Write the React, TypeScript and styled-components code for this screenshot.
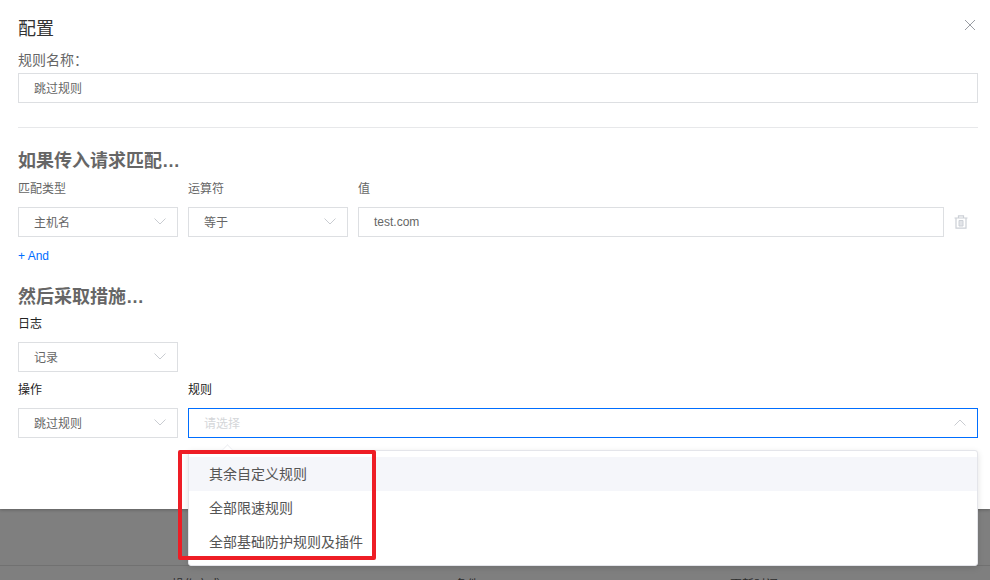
import React from "react";
import styled, { createGlobalStyle } from "styled-components";

const Global = createGlobalStyle`
  html, body { margin: 0; padding: 0; width: 990px; height: 580px; overflow: hidden; background: #7f7f7f; }
  * { box-sizing: border-box; }
  body { font-family: "Liberation Sans", "Noto Sans CJK SC", sans-serif; }
`;
const Page = styled.div`
  position: relative; width: 990px; height: 580px; display: flex; flex-direction: column; overflow: hidden;
`;
const Sheet = styled.div`
  position: relative; height: 509px; background: #fff; padding: 17px 12px 0 18px; display: flex; flex-direction: column;
  box-shadow: 0 1px 3px rgba(0,0,0,.25);
`;
const Backdrop = styled.div`
  flex: 1; background: #7f7f7f; display: flex; flex-direction: column; justify-content: flex-end;
`;
const BackdropHead = styled.div`
  height: 15px; border-top: 1px solid #717171; display: flex; color: #2c2c2c; font-size: 12px; line-height: 38px; padding-left: 172px; overflow: hidden;
`;
const BackdropCell = styled.span<{ $w: number }>` width: ${p => p.$w}px; flex: none; `;
const Title = styled.h2`
  margin: 0; font-size: 18px; line-height: 24px; font-weight: 400; color: #333;
`;
const Close = styled.button`
  position: absolute; top: 19px; right: 14px; width: 12px; height: 12px; padding: 0; border: 0; background: none; display: flex;
`;
const NameLabel = styled.div`
  margin-top: 9px; font-size: 14px; line-height: 20px; color: #666;
`;
const Box = styled.div<{ $focus?: boolean }>`
  height: 30px; width: 100%; flex: none;
  border: 1px solid ${p => (p.$focus ? "#006eff" : "#dddfe2")};
  background: #fff; padding: 0 15px 1px; display: flex; align-items: center; justify-content: space-between;
  font-size: 12px; color: #666;
`;
const NameBox = styled(Box)` margin-top: 3px; `;
const Divider = styled.div` margin-top: 24px; height: 1px; background: #e7e8ea; flex: none; `;
const SectionTitle = styled.h3<{ $mt: number }>`
  margin: ${p => p.$mt}px 0 0; font-size: 18px; line-height: 24px; font-weight: 700; color: #666;
`;
const FieldRow = styled.div<{ $mt: number }>` display: flex; align-items: flex-start; gap: 10px; margin-top: ${p => p.$mt}px; `;
const Field = styled.div<{ $w?: number }>`
  display: flex; flex-direction: column; gap: 8px; ${p => (p.$w ? `width: ${p.$w}px; flex: none;` : "flex: 1;")}
`;
const Label = styled.div<{ $dark?: boolean }>`
  font-size: 12px; line-height: 20px; height: 20px; color: ${p => (p.$dark ? "#222" : "#666")};
`;
const Placeholder = styled.span` color: #d4d6d9; `;
const Trash = styled.div` width: 34px; height: 30px; flex: none; margin-left: -10px; display: flex; align-items: center; justify-content: center; align-self: flex-end; `;
const AddLink = styled.a`
  margin-top: 10px; font-size: 12px; line-height: 18px; color: #006eff; text-decoration: none;
`;
const Menu = styled.div`
  position: absolute; left: 188px; top: 450px; width: 790px; height: 116px; background: #fff; padding: 6px 0 7px;
  border: 1px solid #e4e5ea; border-radius: 3px; box-shadow: 0 2px 6px rgba(0,0,0,.12);
  &::before {
    content: ""; position: absolute; left: 34px; top: -5px; width: 8px; height: 8px; background: #fff;
    transform: rotate(45deg); border-left: 1px solid #eeeff2; border-top: 1px solid #eeeff2;
  }
`;
const MenuItem = styled.div<{ $active?: boolean }>`
  position: relative; height: 34px; line-height: 34px; padding-left: 20px; font-size: 14px; color: #555;
  background: ${p => (p.$active ? "#f5f6fa" : "transparent")};
`;
const Highlight = styled.div`
  position: absolute; left: 178px; top: 450px; width: 198px; height: 110px; border: 4px solid #ee1d25; border-radius: 2px; pointer-events: none;
`;

const ChevronIcon = styled.svg` margin-right: -4px; flex: none; `;
const Chevron = ({ up }: { up?: boolean }) => (
  <ChevronIcon width="12" height="7" viewBox="0 0 12 7" fill="none">
    <path d={up ? "M.5 6.500 6 1l5.500 5.500" : "M.5.5 6 6 11.500.5"} stroke="#c9ccd1" strokeWidth="1" />
  </ChevronIcon>
);
const Select = ({ text }: { text: string }) => (
  <Box>
    {text}
    <Chevron />
  </Box>
);

export default function App() {
  return (
    <Page>
      <Global />
      <Sheet>
        <Title>配置</Title>
        <Close aria-label="关闭">
          <svg width="12" height="12" viewBox="0 0 12 12" fill="none">
            <path d="M1 1l10 10M11 1 1 11" stroke="#9a9da3" strokeWidth="1" />
          </svg>
        </Close>
        <NameLabel>规则名称：</NameLabel>
        <NameBox>跳过规则</NameBox>
        <Divider />
        <SectionTitle $mt={21}>如果传入请求匹配…</SectionTitle>
        <FieldRow $mt={6}>
          <Field $w={160}>
            <Label>匹配类型</Label>
            <Select text="主机名" />
          </Field>
          <Field $w={160}>
            <Label>运算符</Label>
            <Select text="等于" />
          </Field>
          <Field>
            <Label>值</Label>
            <Box>test.com</Box>
          </Field>
          <Trash>
            <svg width="14" height="14" viewBox="0 0 14 14" fill="none" stroke="#ccd0d6" strokeWidth="1.2">
              <path d="M.5 3h13M4.500 3V.8h5V3M2 3v10.200h10V3" />
              <path d="M5 5.500h4v5.500H5z" fill="#e2e4e8" strokeWidth="1" />
            </svg>
          </Trash>
        </FieldRow>
        <AddLink href="#">+ And</AddLink>
        <SectionTitle $mt={20}>然后采取措施…</SectionTitle>
        <FieldRow $mt={5}>
          <Field $w={160}>
            <Label $dark>日志</Label>
            <Select text="记录" />
          </Field>
        </FieldRow>
        <FieldRow $mt={8}>
          <Field $w={160}>
            <Label $dark>操作</Label>
            <Select text="跳过规则" />
          </Field>
          <Field>
            <Label $dark>规则</Label>
            <Box $focus>
              <Placeholder>请选择</Placeholder>
              <Chevron up />
            </Box>
          </Field>
        </FieldRow>
      </Sheet>
      <Backdrop>
        <BackdropHead>
          <BackdropCell $w={283}>操作方式</BackdropCell>
          <BackdropCell $w={275}>条件</BackdropCell>
          <BackdropCell $w={200}>更新时间</BackdropCell>
        </BackdropHead>
      </Backdrop>
      <Menu>
        <MenuItem $active>其余自定义规则</MenuItem>
        <MenuItem>全部限速规则</MenuItem>
        <MenuItem>全部基础防护规则及插件</MenuItem>
      </Menu>
      <Highlight />
    </Page>
  );
}
